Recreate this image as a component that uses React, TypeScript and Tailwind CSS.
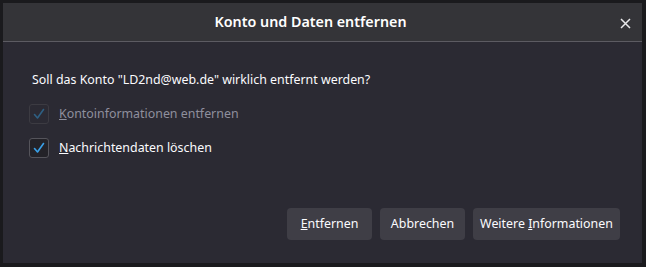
import React from 'react';

function Check({ disabled }: { disabled?: boolean }) {
  return (
    <span
      className={`flex h-[20px] w-[20px] shrink-0 items-center justify-center rounded-[3px] border ${
        disabled ? 'border-[#3c3b42] bg-[#2b2a33]' : 'border-[#55545b] bg-[#232228]'
      }`}
    >
      <svg width="14" height="14" viewBox="0 0 14 14" fill="none">
        <path
          d="M2.5 7.5 L5.5 11 L11.5 2.5"
          stroke={disabled ? '#2e5f82' : '#3aa0e8'}
          strokeWidth="1.6"
          strokeLinecap="round"
          strokeLinejoin="round"
        />
      </svg>
    </span>
  );
}

export default function App() {
  return (
    <div
      className="h-[267px] w-[646px] bg-[#1a1a1d] p-[3px] text-[12.4px]"
      style={{ fontFamily: '"Noto Sans", "Open Sans", sans-serif' }}
    >
      <div className="flex h-[260px] w-[639px] flex-col bg-[#2b2a33]">
        <div className="relative flex h-[39px] items-center justify-center border-b border-[#5c5b62] bg-[#343438] pr-[24px]">
          <h1 className="text-[14.3px] font-semibold text-white">Konto und Daten entfernen</h1>
          <button className="absolute right-[11px] top-[15px] text-[#e8e8ea]">
            <svg width="11" height="11" viewBox="0 0 11 11">
              <path d="M1 1 L10 10 M10 1 L1 10" stroke="currentColor" strokeWidth="1.5" />
            </svg>
          </button>
        </div>

        <div className="flex flex-1 flex-col px-[26px] pt-[29px]">
          <p className="pl-[3px] leading-[18px] text-[#fbfbfe]">
            Soll das Konto "LD2nd@web.de" wirklich entfernt werden?
          </p>
          <label className="mt-[15px] flex items-center gap-[10px] text-[#8f8f9d]">
            <Check disabled />
            <span>
              <span className="underline">K</span>ontoinformationen entfernen
            </span>
          </label>
          <label className="mt-[14px] flex items-center gap-[10px] text-[#fbfbfe]">
            <Check />
            <span>
              <span className="underline">N</span>achrichtendaten löschen
            </span>
          </label>

          <div className="mt-auto mb-[23px] flex justify-end gap-[8px]">
            <button className="h-[32px] w-[85px] rounded-[4px] bg-[#3f3e46] text-[#fbfbfe]">
              <span className="underline">E</span>ntfernen
            </button>
            <button className="h-[32px] w-[85px] rounded-[4px] bg-[#3f3e46] text-[#fbfbfe]">
              Abbrechen
            </button>
            <button className="mr-[-4px] h-[32px] w-[147px] rounded-[4px] bg-[#3f3e46] text-[#fbfbfe]">
              Weitere <span className="underline">I</span>nformationen
            </button>
          </div>
        </div>
      </div>
    </div>
  );
}
